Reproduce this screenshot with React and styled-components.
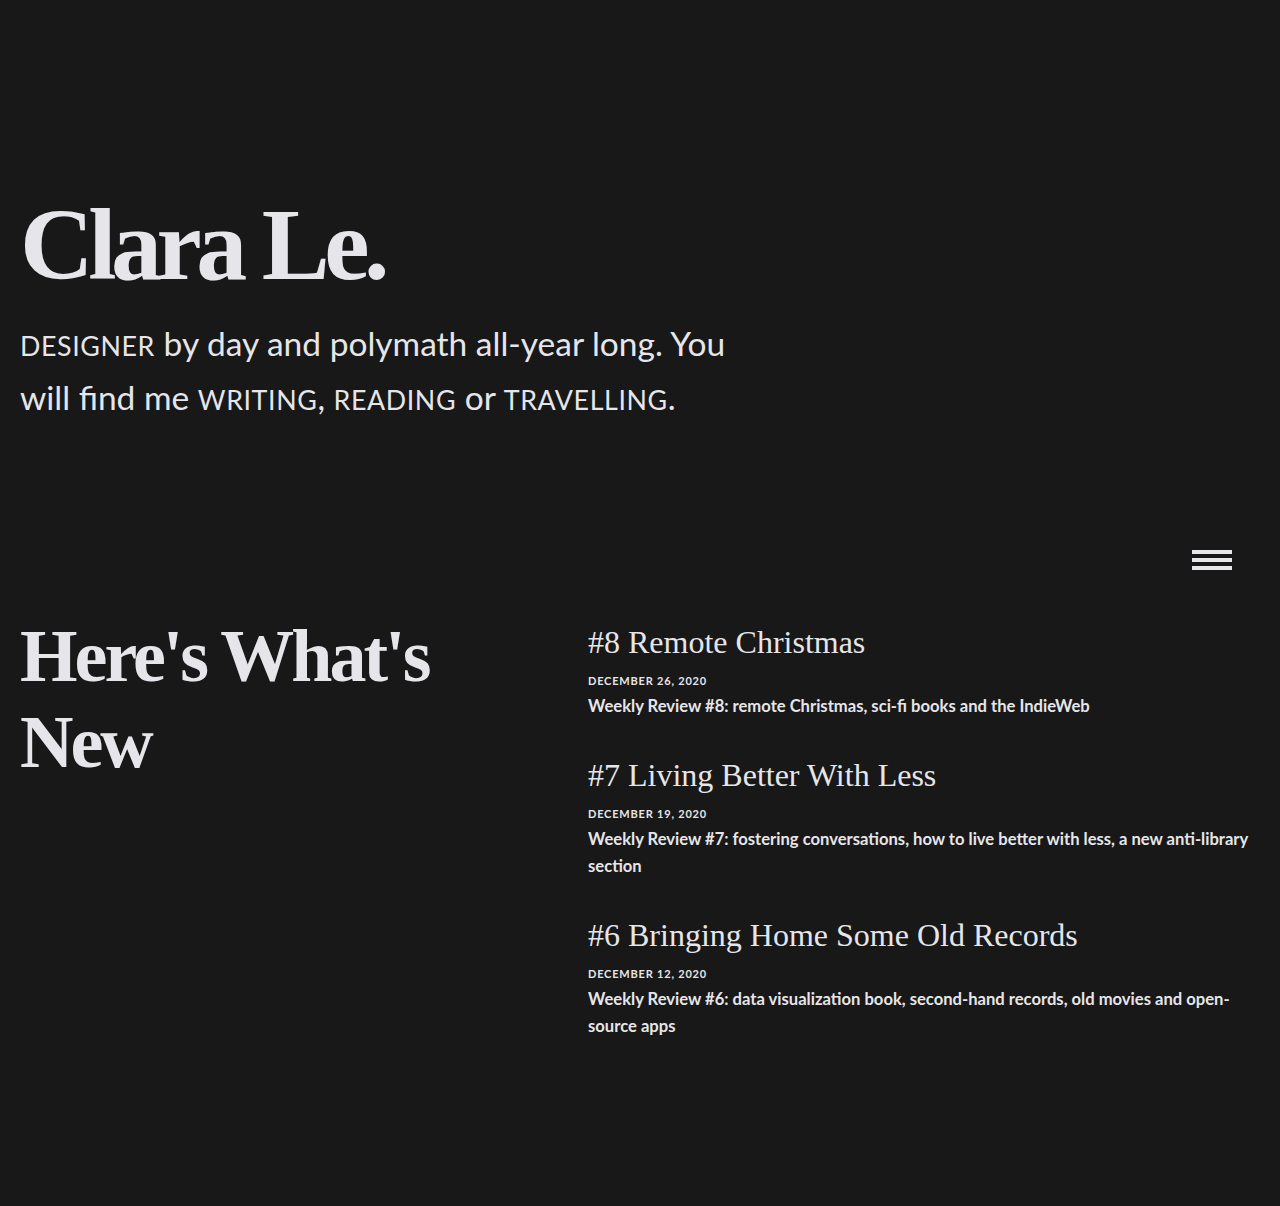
import React from "react";
import styled, { createGlobalStyle } from "styled-components";

const Global = createGlobalStyle`
  html, body { margin: 0; padding: 0; background: #181818; }
  body { color: #e6e6ea; font-family: "Lato", "Open Sans", sans-serif; }
  * { box-sizing: border-box; }
`;

const Page = styled.div`
  min-height: 1206px;
  background: #181818;
  padding: 0 20px;
`;

const Hero = styled.header`
  padding-top: 184px;
  padding-bottom: 126px;
`;

const Name = styled.h1`
  margin: 0;
  font-family: "Liberation Serif", serif;
  font-weight: 700;
  font-size: 102px;
  line-height: 1.2;
  letter-spacing: -5.5px;
  color: #e6e6ea;
`;

const Intro = styled.p`
  margin: 10px 0 0;
  max-width: 760px;
  font-size: 33.5px;
  line-height: 54px;
  font-weight: 400;
`;

const Caps = styled.span`
  text-transform: uppercase;
  font-size: 0.8em;
  line-height: 1;
  letter-spacing: 0.6px;
`;

const MenuRow = styled.div`
  display: flex;
  justify-content: flex-end;
  padding-right: 28px;
`;

const Burger = styled.button`
  display: flex;
  flex-direction: column;
  gap: 4px;
  width: 40px;
  padding: 0;
  background: none;
  border: 0;
  cursor: pointer;
`;

const Bar = styled.span`
  display: block;
  height: 4px;
  width: 40px;
  background: #e6e6ea;
`;

const Section = styled.section`
  display: grid;
  grid-template-columns: 568px 1fr;
  margin-top: 43px;
`;

const SectionTitle = styled.h2`
  margin: 0;
  font-family: "Liberation Serif", serif;
  font-weight: 700;
  font-size: 74px;
  line-height: 86px;
  letter-spacing: -3px;
`;

const Posts = styled.div`
  display: flex;
  flex-direction: column;
  gap: 33px;
  padding-top: 7px;
`;

const Post = styled.article`
  display: flex;
  flex-direction: column;
`;

const PostTitle = styled.h3`
  margin: 0;
  font-family: "Liberation Serif", serif;
  font-weight: 400;
  font-size: 32px;
  line-height: 44px;
`;

const PostDate = styled.div`
  margin-top: 10px;
  font-size: 11px;
  font-weight: 700;
  letter-spacing: 0.8px;
  text-transform: uppercase;
`;

const PostDesc = styled.p`
  margin: 6px 0 0;
  font-size: 16.6px;
  line-height: 27px;
  font-weight: 700;
`;

const posts = [
  {
    title: "#8 Remote Christmas",
    date: "December 26, 2020",
    desc: "Weekly Review #8: remote Christmas, sci-fi books and the IndieWeb",
  },
  {
    title: "#7 Living Better With Less",
    date: "December 19, 2020",
    desc: "Weekly Review #7: fostering conversations, how to live better with less, a new anti-library section",
  },
  {
    title: "#6 Bringing Home Some Old Records",
    date: "December 12, 2020",
    desc: "Weekly Review #6: data visualization book, second-hand records, old movies and open-source apps",
  },
];

export default function App() {
  return (
    <Page>
      <Global />
      <Hero>
        <Name>Clara Le.</Name>
        <Intro>
          <Caps>Designer</Caps> by day and polymath all-year long. You will find me{" "}
          <Caps>Writing</Caps>, <Caps>Reading</Caps> or <Caps>Travelling</Caps>.
        </Intro>
      </Hero>
      <MenuRow>
        <Burger aria-label="Menu">
          <Bar />
          <Bar />
          <Bar />
        </Burger>
      </MenuRow>
      <Section>
        <SectionTitle>
          Here's What's
          <br />
          New
        </SectionTitle>
        <Posts>
          {posts.map((p) => (
            <Post key={p.title}>
              <PostTitle>{p.title}</PostTitle>
              <PostDate>{p.date}</PostDate>
              <PostDesc>{p.desc}</PostDesc>
            </Post>
          ))}
        </Posts>
      </Section>
    </Page>
  );
}
